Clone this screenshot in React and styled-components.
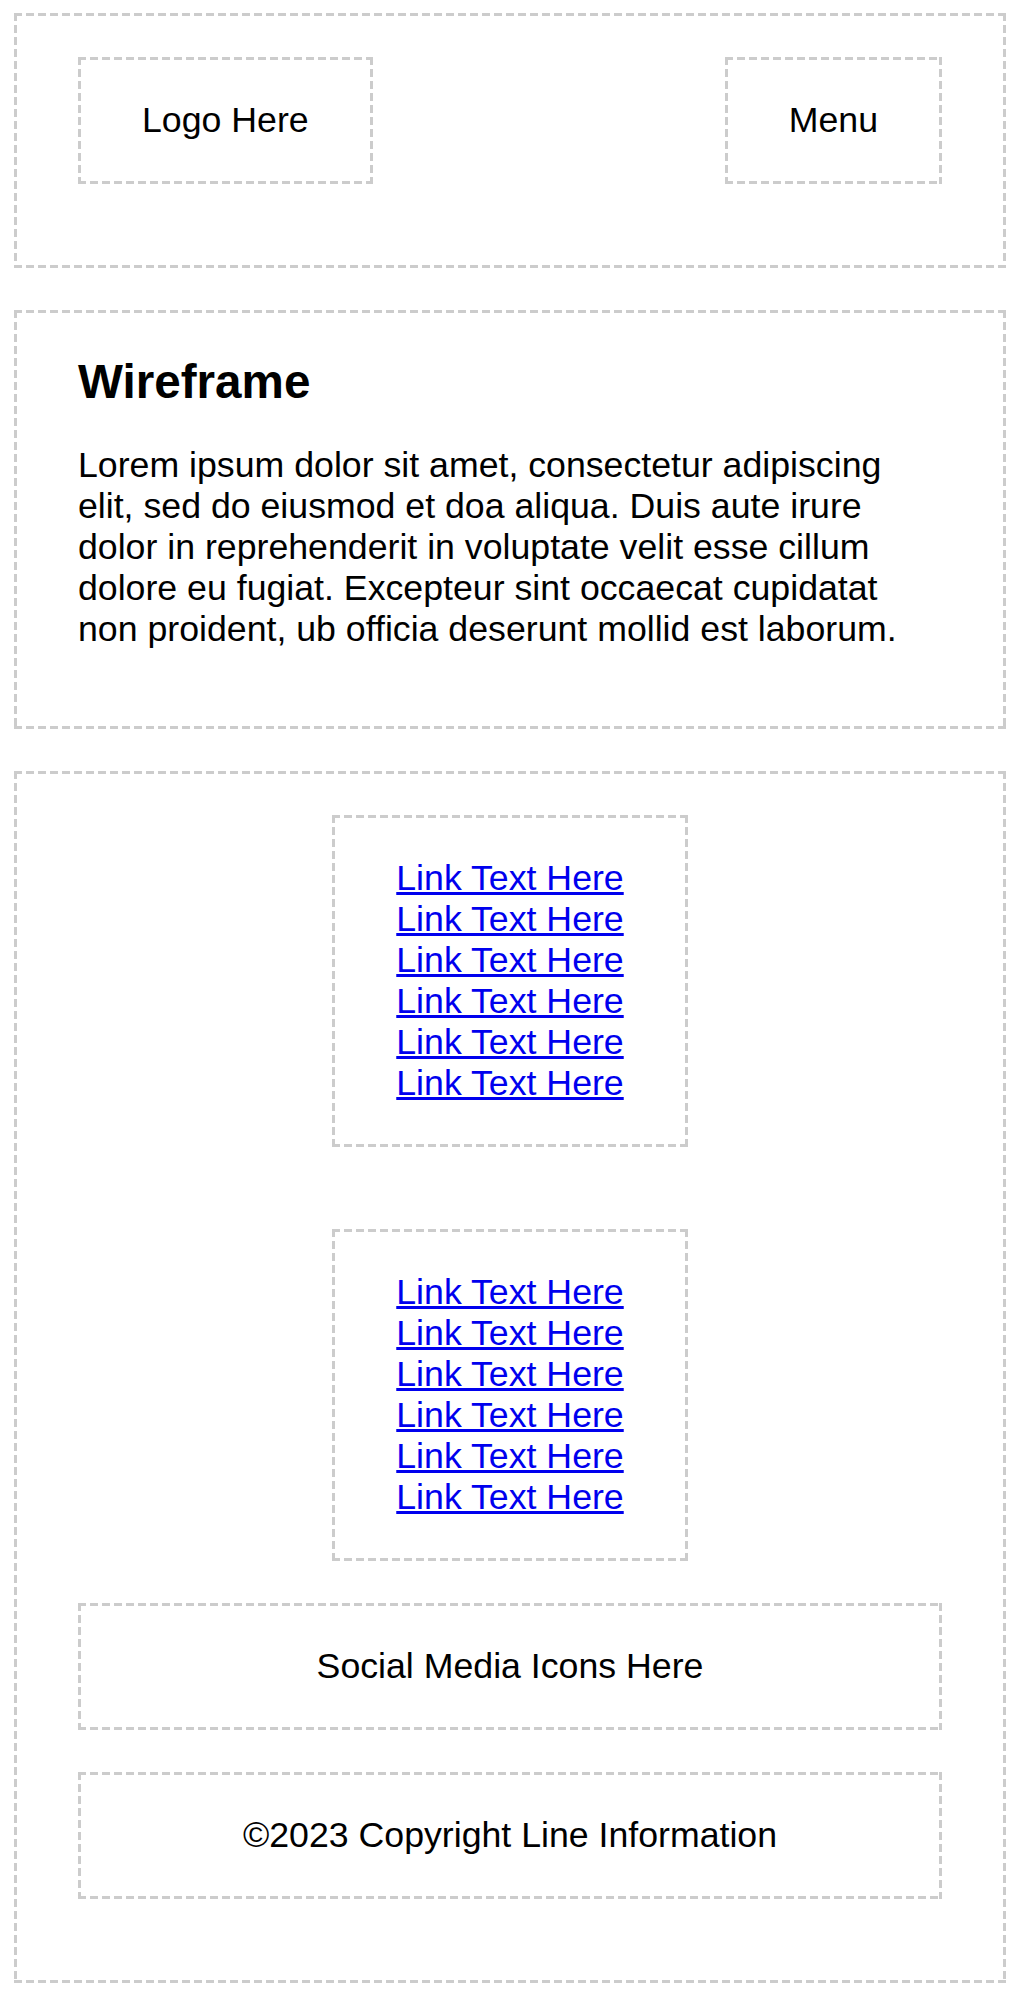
import React from "react";
import styled, { createGlobalStyle, css } from "styled-components";

const GlobalStyle = createGlobalStyle`
  body {
    margin: 0;
    background: #ffffff;
    font-family: "Liberation Sans", Arial, Helvetica, sans-serif;
    color: #000000;
  }
`;

// wireframe dashes: ~8px dash, ~4px gap, drawn with gradients so the rhythm matches
const dashed = css`
  border: 3px solid transparent;
  background-origin: border-box;
  background-clip: border-box;
  background-image: linear-gradient(to right, #cccccc 8px, transparent 8px),
    linear-gradient(to right, #cccccc 8px, transparent 8px),
    linear-gradient(to bottom, #cccccc 8px, transparent 8px),
    linear-gradient(to bottom, #cccccc 8px, transparent 8px);
  background-size: 12px 3px, 12px 3px, 3px 12px, 3px 12px;
  background-position: left top, left bottom, left top, right top;
  background-repeat: repeat-x, repeat-x, repeat-y, repeat-y;
`;

const Page = styled.div`
  display: flex;
  flex-direction: column;
  gap: 42px;
  padding: 13px 14px 17px;
`;

const Frame = styled.div`
  ${dashed}
`;

const Header = styled(Frame)`
  display: flex;
  justify-content: space-between;
  align-items: flex-start;
  padding: 41px 61px 81px;
`;

const Slot = styled(Frame)`
  padding: 40px 61px;
  font-size: 35.7px;
  line-height: 41px;
  text-align: center;
`;

const Main = styled(Frame)`
  padding: 41px 61px;
`;

const Heading = styled.h1`
  margin: 0 0 35.7px;
  font-size: 47.6px;
  font-weight: 700;
  line-height: normal;
`;

const Text = styled.p`
  margin: 0 0 35.7px;
  font-size: 35.7px;
  line-height: 41px;
`;

const Footer = styled(Frame)`
  display: flex;
  flex-direction: column;
  gap: 42px;
  padding: 41px 61px 81px;
`;

const LinkGroups = styled.div`
  display: flex;
  flex-direction: column;
  align-items: center;
  gap: 82px;
`;

const LinkBox = styled(Frame)`
  display: flex;
  flex-direction: column;
  align-items: center;
  padding: 40px 61px;
`;

const Link = styled.a`
  color: #0000ee;
  text-decoration: underline;
  font-size: 35.7px;
  line-height: 41px;
`;

const links = Array.from({ length: 6 }, (_, i) => i);

const App = () => {
  return (
    <>
      <GlobalStyle />
      <Page>
        <Header>
          <Slot>Logo Here</Slot>
          <Slot>Menu</Slot>
        </Header>

        <Main>
          <Heading>Wireframe</Heading>
          <Text>
            Lorem ipsum dolor sit amet, consectetur adipiscing elit, sed do
            eiusmod et doa aliqua. Duis aute irure dolor in reprehenderit in
            voluptate velit esse cillum dolore eu fugiat. Excepteur sint
            occaecat cupidatat non proident, ub officia deserunt mollid est
            laborum.
          </Text>
        </Main>

        <Footer>
          <LinkGroups>
            {[0, 1].map((group) => (
              <LinkBox key={group}>
                {links.map((i) => (
                  <Link key={i} href="#">
                    Link Text Here
                  </Link>
                ))}
              </LinkBox>
            ))}
          </LinkGroups>
          <Slot>Social Media Icons Here</Slot>
          <Slot>©2023 Copyright Line Information</Slot>
        </Footer>
      </Page>
    </>
  );
};

export default App;
